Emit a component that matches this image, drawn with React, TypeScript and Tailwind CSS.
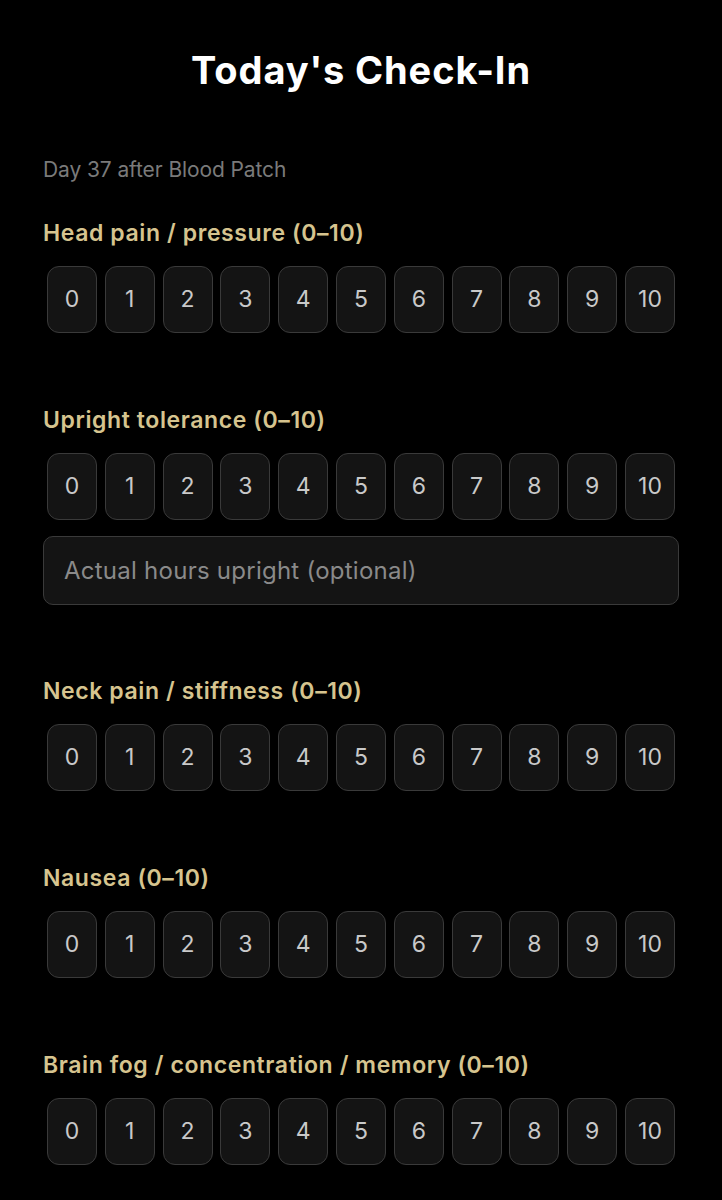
import React from "react";

const font = { fontFamily: "Inter, 'Noto Sans', 'Liberation Sans', sans-serif" };

function Scale() {
  const nums = Array.from({ length: 11 }, (_, i) => i);
  return (
    <div className="flex justify-between px-[4px] mt-[19px]">
      {nums.map((n) => (
        <button
          key={n}
          className="w-[50px] h-[67px] rounded-[12px] border-[1.5px] border-[#3a3a3a] bg-[#141414] text-[23px] text-[#c9c9c9] flex items-center justify-center"
        >
          {n}
        </button>
      ))}
    </div>
  );
}

function Label({ children }: { children: React.ReactNode }) {
  return (
    <div className="text-[23px] leading-[28px] font-semibold text-[#d6c48f] tracking-[0.6px]">
      {children}
    </div>
  );
}

export default function App() {
  return (
    <div className="min-h-[1200px] bg-black px-[43px] pt-[47px]" style={font}>
      <h1 className="text-center text-white font-bold text-[38px] leading-[46px] tracking-[0.9px]">
        Today's Check-In
      </h1>
      <div className="mt-[65px] text-[21px] leading-[24px] text-[#7a7a7a] tracking-[-0.1px]">Day 37 after Blood Patch</div>

      <div className="mt-[37px]">
        <Label>Head pain / pressure (0–10)</Label>
        <Scale />
      </div>

      <div className="mt-[73px]">
        <Label>Upright tolerance (0–10)</Label>
        <Scale />
        <div className="mt-[16px] h-[69px] rounded-[10px] border-[1.5px] border-[#3a3a3a] bg-[#141414] flex items-center pl-[20px]">
          <input
            placeholder="Actual hours upright (optional)"
            className="bg-transparent outline-none w-full text-[24px] tracking-[0.25px] text-[#c9c9c9] placeholder:text-[#8a8a8a]"
            style={font}
          />
        </div>
      </div>

      <div className="mt-[72px]">
        <Label>Neck pain / stiffness (0–10)</Label>
        <Scale />
      </div>

      <div className="mt-[73px]">
        <Label>Nausea (0–10)</Label>
        <Scale />
      </div>

      <div className="mt-[73px]">
        <Label>Brain fog / concentration / memory (0–10)</Label>
        <Scale />
      </div>
    </div>
  );
}
